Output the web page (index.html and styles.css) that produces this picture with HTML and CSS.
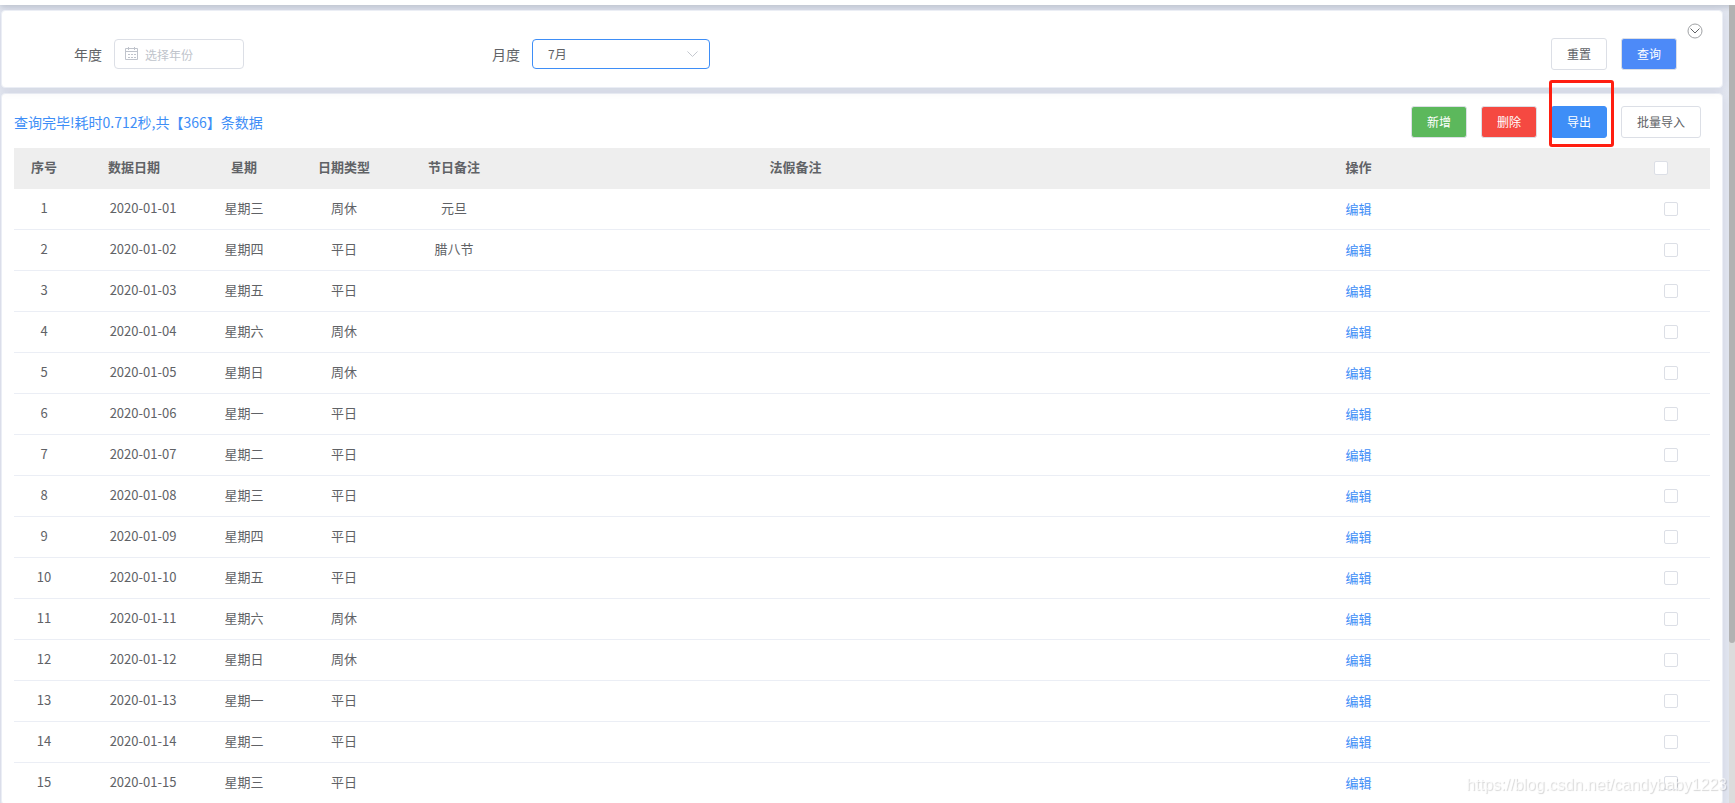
FILE: index.html
```html
<!DOCTYPE html>
<html lang="zh-CN">
<head>
<meta charset="utf-8">
<title>节假日管理</title>
<link rel="stylesheet" href="styles.css">
</head>
<body>
<div class="topbar"></div>
<div class="body-row">
<main class="page">
  <form class="card search">
    <div class="field">
      <label for="year">年度</label>
      <div class="control control-year">
        <svg class="icon-calendar" viewBox="0 0 14 14" aria-hidden="true"><path d="M.5 1.500h12v11H.5zM.5 4.500h12M3.500 0v3M9.500 0v3M3 7.500h2M6 7.500h2M9 7.500h2M3 10.500h2M6 10.500h2M9 10.500h2"/></svg>
        <input id="year" type="text" placeholder="选择年份">
      </div>
    </div>
    <div class="field">
      <label for="month">月度</label>
      <div class="control control-month">
        <select id="month"><option>7月</option></select>
        <svg class="icon-arrow" viewBox="0 0 12 7" aria-hidden="true"><path d="M.5.5 6 6 11.500.5"/></svg>
      </div>
    </div>
    <div class="actions">
      <button type="button" class="btn">重置</button>
      <button type="button" class="btn btn-primary">查询</button>
    </div>
    <button type="button" class="toggle" aria-label="展开"><svg viewBox="0 0 16 16" aria-hidden="true"><circle cx="8" cy="8" r="7"/><path d="M3.500 5.500 8 10l4.500-4.500"/></svg></button>
  </form>

  <section class="card list">
    <div class="toolbar">
      <p class="summary">查询完毕!耗时0.712秒,共【366】条数据</p>
      <div class="tools">
        <button type="button" class="btn btn-success">新增</button>
        <button type="button" class="btn btn-danger">删除</button>
        <div class="marked"><button type="button" class="btn btn-active">导出</button></div>
        <button type="button" class="btn">批量导入</button>
      </div>
    </div>
    <table class="grid">
      <colgroup><col class="c-no"><col class="c-date"><col class="c-week"><col class="c-week"><col class="c-date"><col><col><col class="c-check"></colgroup>
      <thead><tr><th>序号</th><th>数据日期</th><th>星期</th><th>日期类型</th><th>节日备注</th><th>法假备注</th><th>操作</th><th class="check"><input type="checkbox" aria-label="全选"></th></tr></thead>
      <tbody>
        <tr><td>1</td><td class="date">2020-01-01</td><td>星期三</td><td>周休</td><td>元旦</td><td></td><td class="op"><a href="#">编辑</a></td><td class="check"><input type="checkbox" aria-label="选择 1"></td></tr>
        <tr><td>2</td><td class="date">2020-01-02</td><td>星期四</td><td>平日</td><td>腊八节</td><td></td><td class="op"><a href="#">编辑</a></td><td class="check"><input type="checkbox" aria-label="选择 2"></td></tr>
        <tr><td>3</td><td class="date">2020-01-03</td><td>星期五</td><td>平日</td><td></td><td></td><td class="op"><a href="#">编辑</a></td><td class="check"><input type="checkbox" aria-label="选择 3"></td></tr>
        <tr><td>4</td><td class="date">2020-01-04</td><td>星期六</td><td>周休</td><td></td><td></td><td class="op"><a href="#">编辑</a></td><td class="check"><input type="checkbox" aria-label="选择 4"></td></tr>
        <tr><td>5</td><td class="date">2020-01-05</td><td>星期日</td><td>周休</td><td></td><td></td><td class="op"><a href="#">编辑</a></td><td class="check"><input type="checkbox" aria-label="选择 5"></td></tr>
        <tr><td>6</td><td class="date">2020-01-06</td><td>星期一</td><td>平日</td><td></td><td></td><td class="op"><a href="#">编辑</a></td><td class="check"><input type="checkbox" aria-label="选择 6"></td></tr>
        <tr><td>7</td><td class="date">2020-01-07</td><td>星期二</td><td>平日</td><td></td><td></td><td class="op"><a href="#">编辑</a></td><td class="check"><input type="checkbox" aria-label="选择 7"></td></tr>
        <tr><td>8</td><td class="date">2020-01-08</td><td>星期三</td><td>平日</td><td></td><td></td><td class="op"><a href="#">编辑</a></td><td class="check"><input type="checkbox" aria-label="选择 8"></td></tr>
        <tr><td>9</td><td class="date">2020-01-09</td><td>星期四</td><td>平日</td><td></td><td></td><td class="op"><a href="#">编辑</a></td><td class="check"><input type="checkbox" aria-label="选择 9"></td></tr>
        <tr><td>10</td><td class="date">2020-01-10</td><td>星期五</td><td>平日</td><td></td><td></td><td class="op"><a href="#">编辑</a></td><td class="check"><input type="checkbox" aria-label="选择 10"></td></tr>
        <tr><td>11</td><td class="date">2020-01-11</td><td>星期六</td><td>周休</td><td></td><td></td><td class="op"><a href="#">编辑</a></td><td class="check"><input type="checkbox" aria-label="选择 11"></td></tr>
        <tr><td>12</td><td class="date">2020-01-12</td><td>星期日</td><td>周休</td><td></td><td></td><td class="op"><a href="#">编辑</a></td><td class="check"><input type="checkbox" aria-label="选择 12"></td></tr>
        <tr><td>13</td><td class="date">2020-01-13</td><td>星期一</td><td>平日</td><td></td><td></td><td class="op"><a href="#">编辑</a></td><td class="check"><input type="checkbox" aria-label="选择 13"></td></tr>
        <tr><td>14</td><td class="date">2020-01-14</td><td>星期二</td><td>平日</td><td></td><td></td><td class="op"><a href="#">编辑</a></td><td class="check"><input type="checkbox" aria-label="选择 14"></td></tr>
        <tr><td>15</td><td class="date">2020-01-15</td><td>星期三</td><td>平日</td><td></td><td></td><td class="op"><a href="#">编辑</a></td><td class="check"><input type="checkbox" aria-label="选择 15"></td></tr>
      </tbody>
    </table>
  </section>
</main>
<div class="scrollbar"><div class="thumb"></div></div>
</div>
<div class="watermark">https://blog.csdn.net/candybaby1223</div>
</body>
</html>
```
FILE: styles.css
```css
* {
  box-sizing: border-box;
}

body {
  margin: 0;
  height: 100vh;
  overflow: hidden;
  display: flex;
  flex-direction: column;
  background: #e3e7f1;
  color: #606266;
  font: 13px/20px "Noto Sans CJK SC", sans-serif;
}

input,
select,
button {
  font: inherit;
  color: inherit;
  margin: 0;
}

.topbar {
  flex: none;
  height: 5px;
  background: #fff;
  box-shadow: 0 1px 6px rgba(0, 21, 41, .25);
}

.body-row {
  flex: 1;
  min-height: 0;
  display: flex;
}

.page {
  flex: 1;
  min-width: 0;
  padding: 5px 6px 0 1px;
  overflow: hidden;
}

.card {
  background: #fff;
  border: 1px solid #ebeef5;
  border-radius: 4px;
  box-shadow: 0 2px 12px rgba(0, 21, 61, .08);
}

.search {
  position: relative;
  display: flex;
  align-items: center;
  height: 78px;
  padding: 10px 45px 0 72px;
  margin-bottom: 5px;
}

.field {
  flex: 0 0 418px;
  display: flex;
  align-items: center;
  gap: 12px;
  font-size: 14px;
}

.control {
  position: relative;
  height: 30px;
  font-size: 12px;
}

.control-year {
  width: 130px;
}

.control-month {
  width: 178px;
}

.control input,
.control select {
  appearance: none;
  display: block;
  width: 100%;
  height: 100%;
  border: 1px solid #dcdfe6;
  border-radius: 4px;
  background: #fff;
  padding: 0 15px;
  outline: none;
}

.control input {
  padding: 0 8px 0 30px;
}

.control input::placeholder {
  color: #c0c4cc;
}

.control select {
  border-color: #3e8ef7;
}

.control svg {
  position: absolute;
  fill: none;
  stroke: #c0c4cc;
}

.icon-calendar {
  left: 11px;
  top: 8px;
  width: 14px;
}

.icon-arrow {
  right: 12px;
  top: 12px;
  width: 11px;
}

.actions,
.tools {
  margin-left: auto;
  display: flex;
  gap: 14px;
}

.btn {
  height: 32px;
  padding: 0 15px;
  border: 1px solid #dcdfe6;
  border-radius: 3px;
  background: #fff;
  font-size: 12px;
  line-height: 20px;
}

.btn-primary {
  background: #4d8af8;
  color: #fff;
}

.btn-success {
  background: #5cb85c;
  color: #fff;
}

.btn-danger {
  background: #f54941;
  color: #fff;
}

.btn-active {
  background: #3e8ef7;
  border-color: #3e8ef7;
  color: #fff;
}

.toggle {
  position: absolute;
  right: 19px;
  top: 12px;
  width: 16px;
  height: 16px;
  padding: 0;
  border: 0;
  background: none;
}

.toggle svg {
  display: block;
  fill: none;
  stroke: #606266;
}

.toggle circle {
  stroke: #a0a2a5;
}

.list {
  padding: 12px 12px 0;
}

.toolbar {
  display: flex;
  align-items: center;
  padding-right: 9px;
  margin-bottom: 10px;
}

.summary {
  margin: 0;
  font-size: 14px;
  color: #3e8ef7;
}

.marked {
  position: relative;
}

.marked::after {
  content: "";
  position: absolute;
  inset: -26px -7px -9px -2px;
  border: 3px solid #ff1e10;
  border-radius: 3px;
  pointer-events: none;
}

.grid {
  width: 100%;
  table-layout: fixed;
  border-collapse: separate;
  border-spacing: 0;
  text-align: center;
}

.c-no { width: 60px; }
.c-date { width: 120px; }
.c-week { width: 100px; }
.c-check { width: 70px; }

.grid th,
.grid td {
  height: 41px;
  padding: 0 0 2px;
  border-bottom: 1px solid #ebeef5;
}

.grid th {
  background: #eee;
  border-bottom-color: #eee;
  font-weight: 700;
}

.grid .date {
  padding-left: 18px;
}

.grid .op,
.grid .check {
  padding-bottom: 0;
}

.grid a {
  color: #3e8ef7;
  text-decoration: none;
}

.grid td.check {
  padding-right: 8px;
}

.grid th.check {
  padding-right: 28px;
}

.grid input {
  appearance: none;
  display: block;
  width: 14px;
  height: 14px;
  margin: 0 auto;
  border: 1px solid #dcdfe6;
  border-radius: 2px;
  background: #fff;
}

.scrollbar {
  flex: none;
  width: 6px;
  background: #dcdcdc;
}

.thumb {
  height: 80%;
  background: #b2b2b2;
  border-radius: 0 0 3px 3px;
}

.watermark {
  position: fixed;
  right: 8px;
  bottom: 7px;
  font: 16px/22px "Liberation Sans", sans-serif;
  color: rgba(255, 255, 255, .7);
  text-shadow: 1px 1px 1px rgba(0, 0, 0, .16);
}
```
